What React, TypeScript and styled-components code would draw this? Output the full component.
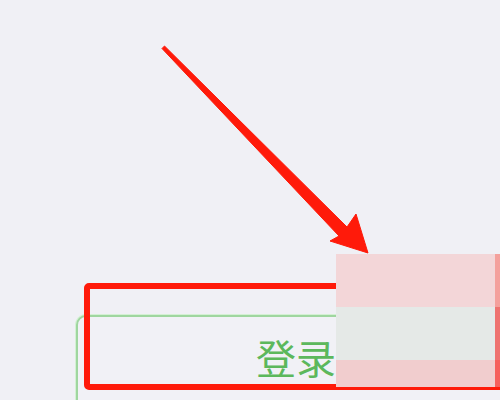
import React from "react";
import styled, { createGlobalStyle } from "styled-components";

const GlobalStyle = createGlobalStyle`
  html, body {
    margin: 0;
    padding: 0;
    background: #f0f0f5;
  }
`;

const Page = styled.div`
  position: relative;
  width: 500px;
  height: 400px;
  overflow: hidden;
  background: #f0f0f5;
  font-family: "Noto Sans CJK SC", "Noto Sans", sans-serif;
`;

const Content = styled.div`
  display: flex;
  flex-direction: column;
  padding: 315px 0 0 76px;
`;

const LoginButton = styled.button`
  width: 440px;
  height: 110px;
  box-sizing: border-box;
  display: flex;
  justify-content: center;
  align-items: flex-start;
  padding: 20px 0 0;
  background: #f1f1f6;
  border: 2px solid #9fd69f;
  box-shadow: 0 0 0 1px #d4f0d4;
  border-radius: 10px;
  color: #5cb85c;
  font-family: "Noto Sans CJK SC", "Noto Sans", sans-serif;
  font-size: 40px;
  line-height: 40px;
  cursor: pointer;
`;

const Highlight = styled.div`
  position: absolute;
  left: 84px;
  top: 283px;
  width: 430px;
  height: 107px;
  box-sizing: border-box;
  border: 6px solid #ff1a0a;
  border-radius: 5px;
`;

const Mask = styled.div`
  position: absolute;
  left: 336px;
  top: 254px;
  width: 164px;
  height: 133px;
  display: grid;
  grid-template-columns: 1fr 5px;
  grid-template-rows: 53px 53px 27px;
`;

const Band = styled.div<{ $bg: string }>`
  background: ${(p) => p.$bg};
`;

const Arrow = styled.svg`
  position: absolute;
  left: 0;
  top: 0;
  pointer-events: none;
`;

export default function App() {
  return (
    <>
      <GlobalStyle />
      <Page>
        <Content>
          <LoginButton>登录</LoginButton>
        </Content>
        <Highlight />
        <Mask>
          <Band $bg="#f3d6d8" />
          <Band $bg="#f4a09c" />
          <Band $bg="#e5e9e7" />
          <Band $bg="#ee7370" />
          <Band $bg="#f1cdce" />
          <Band $bg="#f65f5c" />
        </Mask>
        <Arrow width="500" height="400" viewBox="0 0 500 400">
          <polygon
            points="162,48.5 164.5,46 347,227 356,214 368,253 330,241 339,236"
            fill="#ff1a0a"
            stroke="#ff1a0a"
            strokeWidth="1"
            strokeLinejoin="round"
          />
        </Arrow>
      </Page>
    </>
  );
}
